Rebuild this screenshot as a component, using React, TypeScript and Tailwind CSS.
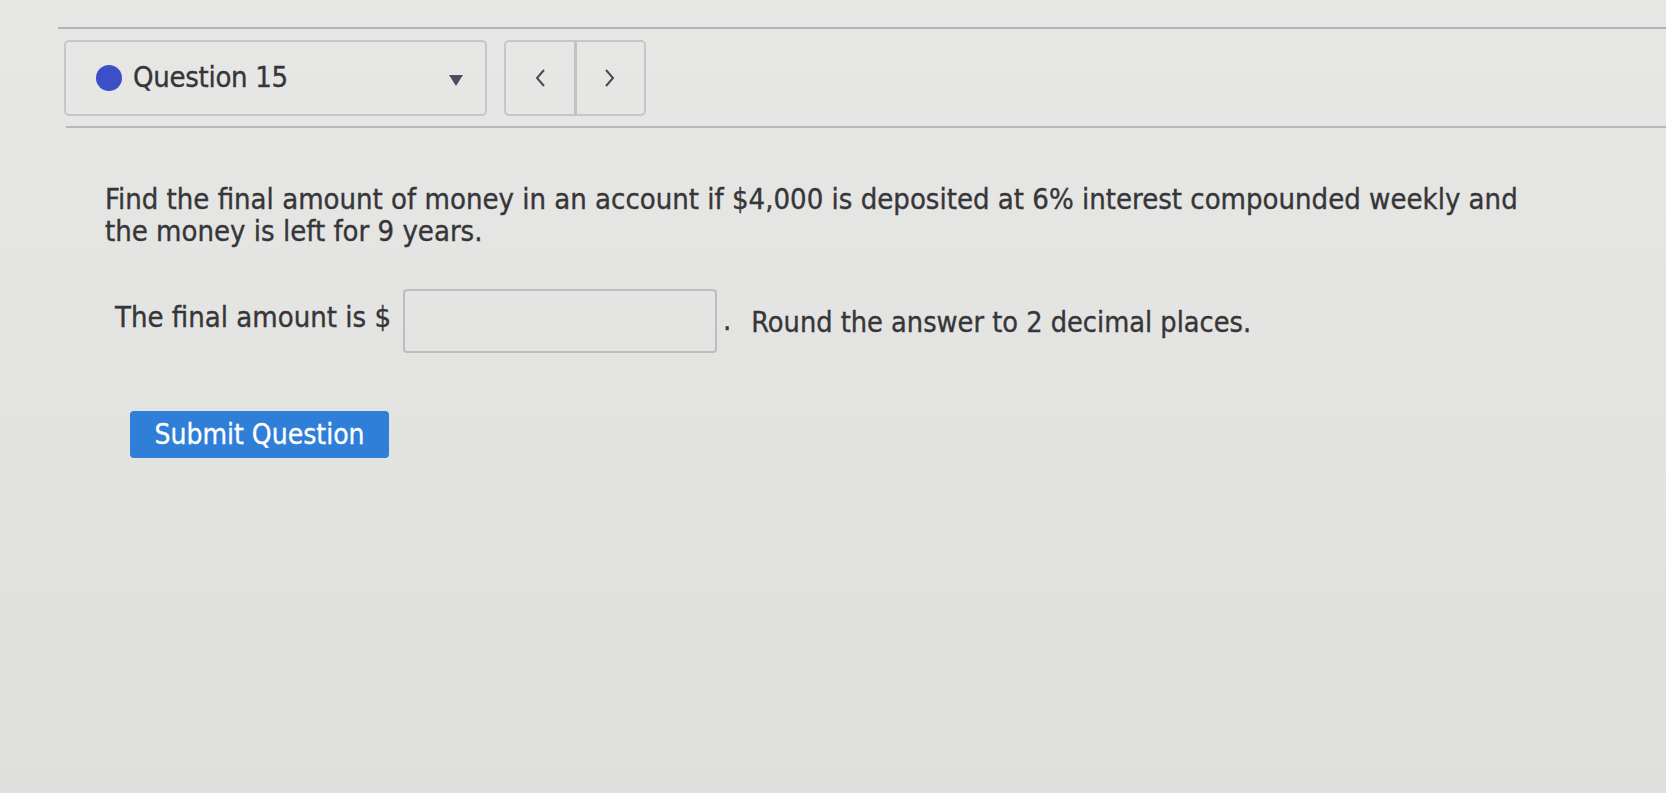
import React from 'react';

const font = { fontFamily: '"DejaVu Sans Condensed", "Lato", "Liberation Sans", sans-serif' };

const App = () => {
  const [answer, setAnswer] = React.useState('');

  return (
    <div
      className="min-h-screen w-full bg-gradient-to-b from-[#e7e7e5] to-[#dfdfdd] pt-[27px] text-[#363638] [-webkit-text-stroke:0.35px_#363638]"
      style={font}
    >
      {/* top rule */}
      <div className="ml-[58px] h-[2px] bg-[#b4b4b4]" />

      {/* question picker + prev/next */}
      <div className="ml-[64px] mt-[11px] flex gap-[17px]">
        <div className="flex h-[76px] w-[423px] items-center rounded-[5px] border-2 border-[#c6c6c6] pl-[30px] pr-[22px]">
          <span className="h-[26px] w-[26px] shrink-0 rounded-full bg-[#3d4fc6]" />
          <span className="ml-[11px] text-[29px] tracking-[-0.3px]">Question 15</span>
          <svg className="ml-auto mt-[4px]" width="14" height="11" viewBox="0 0 14 11">
            <path d="M0 0h14L7 11z" fill="#4a4d60" />
          </svg>
        </div>
        <div className="flex h-[76px] w-[142px] rounded-[5px] border-2 border-[#c6c6c6]">
          <button className="flex flex-1 items-center justify-center border-r-[3px] border-[#c2c2c2]">
            <svg width="12" height="20" viewBox="0 0 12 20">
              <path d="M10 2 3 10l7 8" fill="none" stroke="#4a4a4c" strokeWidth="2" />
            </svg>
          </button>
          <button className="flex flex-1 items-center justify-center">
            <svg width="12" height="20" viewBox="0 0 12 20">
              <path d="m2 2 7 8-7 8" fill="none" stroke="#4a4a4c" strokeWidth="2" />
            </svg>
          </button>
        </div>
      </div>

      <div className="ml-[66px] mt-[10px] h-[2px] bg-[#b8b8b8]" />

      {/* question body */}
      <div className="pl-[105px] pt-[55px]">
        <p className="text-[29px] leading-[32px]">
          <span className="block whitespace-nowrap">
            Find the final amount of money in an account if $4,000 is deposited at 6% interest compounded weekly and
          </span>
          <span className="block whitespace-nowrap">the money is left for 9 years.</span>
        </p>

        <div className="mt-[36px] flex items-center pl-[10px] text-[29px]">
          <span>The final amount is $</span>
          <input
            value={answer}
            onChange={(e) => setAnswer(e.target.value)}
            className="ml-[12px] mt-[6px] h-[64px] w-[314px] rounded-[4px] border-2 border-[#bdbdbd] bg-transparent px-3 outline-none"
          />
          <span className="ml-[6px] mt-[6px]">.</span>
          <span className="ml-[20px] mt-[8px] text-[28.6px]">Round the answer to 2 decimal places.</span>
        </div>

        <button className="mt-[58px] ml-[25px] h-[47px] w-[259px] rounded-[4px] bg-[#2f7ed8] text-[28px] text-white [-webkit-text-stroke:0.3px_#ffffff]">
          Submit Question
        </button>
      </div>
    </div>
  );
};

export default App;
